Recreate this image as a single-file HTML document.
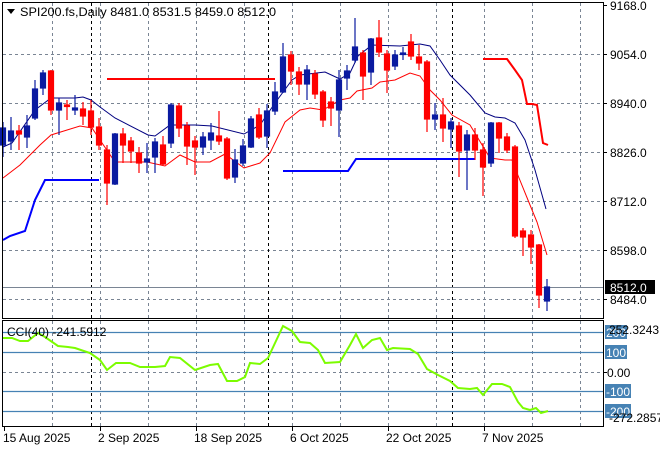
<!DOCTYPE html>
<html><head><meta charset="utf-8"><style>
html,body{margin:0;padding:0;background:#fff;width:660px;height:450px;overflow:hidden}
svg{display:block;font-family:"Liberation Sans",sans-serif}
</style></head><body>
<svg width="660" height="450" viewBox="0 0 660 450" xmlns="http://www.w3.org/2000/svg">
<rect width="660" height="450" fill="#fff"/>
<g stroke="#7a8594" stroke-width="1" stroke-dasharray="3,3" fill="none">
<line x1="3" y1="54.5" x2="603" y2="54.5"/><line x1="3" y1="103.5" x2="603" y2="103.5"/><line x1="3" y1="152.5" x2="603" y2="152.5"/><line x1="3" y1="201.5" x2="603" y2="201.5"/><line x1="3" y1="250.5" x2="603" y2="250.5"/><line x1="3" y1="299.5" x2="603" y2="299.5"/>
<line x1="3" y1="372.5" x2="603" y2="372.5"/>
<path d="M52.5 3V318M100.5 3V318M148.5 3V318M196.5 3V318M244.5 3V318M292.5 3V318M340.5 3V318M388.5 3V318M436.5 3V318M484.5 3V318M532.5 3V318M580.5 3V318"/>
<path d="M52.5 321V426M100.5 321V426M148.5 321V426M196.5 321V426M244.5 321V426M292.5 321V426M340.5 321V426M388.5 321V426M436.5 321V426M484.5 321V426M532.5 321V426M580.5 321V426"/>
</g>
<g stroke="#000" stroke-width="1" stroke-dasharray="3,3">
<path d="M91.5 3V318M268.5 3V318M452.5 3V318M91.5 321V426M268.5 321V426M452.5 321V426"/>
</g>
<line x1="3" y1="287.5" x2="603" y2="287.5" stroke="#7a8594"/>
<g stroke="#4682b4" stroke-width="1.2">
<line x1="3" y1="332.5" x2="603" y2="332.5"/><line x1="3" y1="352.5" x2="603" y2="352.5"/><line x1="3" y1="391.5" x2="603" y2="391.5"/><line x1="3" y1="411.5" x2="603" y2="411.5"/>
</g>
<polyline fill="none" stroke="#0000ff" stroke-width="2" points="3,240 10,236 25,231 35,200 45,180 99,180"/>
<polyline fill="none" stroke="#0000ff" stroke-width="2" points="283,171 348,171 356,159 475,159"/>
<polyline fill="none" stroke="#ff0000" stroke-width="2" points="107,79 275,79"/>
<polyline fill="none" stroke="#ff0000" stroke-width="2" points="483,59 507,59 515,70 522,80 527,104 532,104 537,105 543,143 548,145"/>
<polyline fill="none" stroke="#000080" stroke-width="1" points="3,147 12,143 35,110 51,98 75,98 83,97 91,100 100,107 115,118 148,135 155,136 170,125 195,125 212,126 244,134 260,125 275,103 292,80 300,75 325,72 340,79 350,73 358,56 372,45 400,46 420,44 430,46 440,60 450,75 470,95 485,113 495,117 505,118 515,123 525,140 535,170 546,209"/>
<polyline fill="none" stroke="#ff0000" stroke-width="1" points="3,178 20,165 40,145 51,135 80,126 92,128 100,140 115,162 130,162 147,162 165,166 180,155 195,162 210,162 225,154 244,168 260,163 270,153 285,122 300,110 310,108 323,110 340,100 350,98 357,91 372,88 380,82 395,80 410,73 420,76 430,90 440,100 452,115 470,125 490,158 505,160 512,160 517,173 530,205 537,222 547,255"/>
<g stroke-width="1.2">
<g stroke="#0a1aa0" fill="#0a1aa0">
<line x1="3" y1="122" x2="3" y2="157"/><rect x="0.5" y="128" width="5" height="17"/>
<line x1="11" y1="117" x2="11" y2="150"/><rect x="8.5" y="131" width="5" height="10"/>
<line x1="27" y1="115" x2="27" y2="148"/><rect x="24.5" y="126" width="5" height="11"/>
<line x1="35" y1="80" x2="35" y2="120"/><rect x="32.5" y="89" width="5" height="29"/>
<line x1="43" y1="70" x2="43" y2="95"/><rect x="40.5" y="73" width="5" height="15"/>
<line x1="59" y1="98" x2="59" y2="135"/><rect x="56.5" y="103" width="5" height="7"/>
<line x1="75" y1="95" x2="75" y2="115"/><rect x="72.5" y="108" width="5" height="2"/>
<line x1="115" y1="133" x2="115" y2="185"/><rect x="112.5" y="134" width="5" height="50"/>
<line x1="147" y1="143" x2="147" y2="173"/><rect x="144.5" y="159" width="5" height="3"/>
<line x1="155" y1="138" x2="155" y2="173"/><rect x="152.5" y="142" width="5" height="15"/>
<line x1="171" y1="103" x2="171" y2="148"/><rect x="168.5" y="105" width="5" height="38"/>
<line x1="203" y1="132" x2="203" y2="155"/><rect x="200.5" y="137" width="5" height="10"/>
<line x1="211" y1="123" x2="211" y2="150"/><rect x="208.5" y="133" width="5" height="7"/>
<line x1="235" y1="149" x2="235" y2="183"/><rect x="232.5" y="160" width="5" height="17"/>
<line x1="243" y1="139" x2="243" y2="166"/><rect x="240.5" y="146" width="5" height="17"/>
<line x1="251" y1="116" x2="251" y2="148"/><rect x="248.5" y="119" width="5" height="28"/>
<line x1="267" y1="104" x2="267" y2="148"/><rect x="264.5" y="111" width="5" height="25"/>
<line x1="275" y1="82" x2="275" y2="115"/><rect x="272.5" y="92" width="5" height="19"/>
<line x1="283" y1="43" x2="283" y2="93"/><rect x="280.5" y="57" width="5" height="35"/>
<line x1="307" y1="65" x2="307" y2="100"/><rect x="304.5" y="70" width="5" height="14"/>
<line x1="339" y1="70" x2="339" y2="137"/><rect x="336.5" y="80" width="5" height="30"/>
<line x1="347" y1="65" x2="347" y2="90"/><rect x="344.5" y="71" width="5" height="7"/>
<line x1="355" y1="18" x2="355" y2="63"/><rect x="352.5" y="47" width="5" height="13"/>
<line x1="371" y1="38" x2="371" y2="85"/><rect x="368.5" y="39" width="5" height="33"/>
<line x1="395" y1="50" x2="395" y2="70"/><rect x="392.5" y="55" width="5" height="11"/>
<line x1="403" y1="47" x2="403" y2="60"/><rect x="400.5" y="53" width="5" height="1.5"/>
<line x1="435" y1="103" x2="435" y2="130"/><rect x="432.5" y="115" width="5" height="4"/>
<line x1="451" y1="118" x2="451" y2="148"/><rect x="448.5" y="122" width="5" height="7"/>
<line x1="467" y1="130" x2="467" y2="190"/><rect x="464.5" y="135" width="5" height="15"/>
<line x1="491" y1="122" x2="491" y2="167"/><rect x="488.5" y="123" width="5" height="40"/>
<line x1="547" y1="279" x2="547" y2="311"/><rect x="544.5" y="287" width="5" height="14"/>
</g>
<g stroke="#ff0000" fill="#ff0000">
<line x1="19" y1="125" x2="19" y2="150"/><rect x="16.5" y="131" width="5" height="3"/>
<line x1="51" y1="70" x2="51" y2="115"/><rect x="48.5" y="71" width="5" height="39"/>
<line x1="67" y1="100" x2="67" y2="120"/><rect x="64.5" y="105" width="5" height="1.5"/>
<line x1="83" y1="102" x2="83" y2="125"/><rect x="80.5" y="109" width="5" height="7"/>
<line x1="91" y1="100" x2="91" y2="135"/><rect x="88.5" y="111" width="5" height="16"/>
<line x1="99" y1="118" x2="99" y2="150"/><rect x="96.5" y="127" width="5" height="18"/>
<line x1="107" y1="145" x2="107" y2="205"/><rect x="104.5" y="150" width="5" height="33"/>
<line x1="123" y1="128" x2="123" y2="163"/><rect x="120.5" y="134" width="5" height="11"/>
<line x1="131" y1="137" x2="131" y2="163"/><rect x="128.5" y="141" width="5" height="10"/>
<line x1="139" y1="147" x2="139" y2="173"/><rect x="136.5" y="153" width="5" height="10"/>
<line x1="163" y1="136" x2="163" y2="165"/><rect x="160.5" y="145" width="5" height="19"/>
<line x1="179" y1="103" x2="179" y2="137"/><rect x="176.5" y="106" width="5" height="22"/>
<line x1="187" y1="122" x2="187" y2="165"/><rect x="184.5" y="126" width="5" height="20"/>
<line x1="195" y1="136" x2="195" y2="175"/><rect x="192.5" y="141" width="5" height="6"/>
<line x1="219" y1="111" x2="219" y2="145"/><rect x="216.5" y="136" width="5" height="5"/>
<line x1="227" y1="137" x2="227" y2="180"/><rect x="224.5" y="139" width="5" height="39"/>
<line x1="259" y1="108" x2="259" y2="139"/><rect x="256.5" y="115" width="5" height="22"/>
<line x1="291" y1="51" x2="291" y2="85"/><rect x="288.5" y="55" width="5" height="16"/>
<line x1="299" y1="67" x2="299" y2="95"/><rect x="296.5" y="72" width="5" height="12"/>
<line x1="315" y1="70" x2="315" y2="99"/><rect x="312.5" y="74" width="5" height="20"/>
<line x1="323" y1="90" x2="323" y2="127"/><rect x="320.5" y="92" width="5" height="28"/>
<line x1="331" y1="97" x2="331" y2="126"/><rect x="328.5" y="102" width="5" height="6"/>
<line x1="363" y1="50" x2="363" y2="100"/><rect x="360.5" y="53" width="5" height="23"/>
<line x1="379" y1="20" x2="379" y2="57"/><rect x="376.5" y="38" width="5" height="14"/>
<line x1="387" y1="50" x2="387" y2="93"/><rect x="384.5" y="54" width="5" height="16"/>
<line x1="411" y1="34" x2="411" y2="60"/><rect x="408.5" y="42" width="5" height="14"/>
<line x1="419" y1="45" x2="419" y2="70"/><rect x="416.5" y="57" width="5" height="6"/>
<line x1="427" y1="60" x2="427" y2="132"/><rect x="424.5" y="62" width="5" height="57"/>
<line x1="443" y1="98" x2="443" y2="142"/><rect x="440.5" y="115" width="5" height="13"/>
<line x1="459" y1="122" x2="459" y2="177"/><rect x="456.5" y="126" width="5" height="25"/>
<line x1="475" y1="128" x2="475" y2="160"/><rect x="472.5" y="135" width="5" height="15"/>
<line x1="483" y1="143" x2="483" y2="196"/><rect x="480.5" y="150" width="5" height="17"/>
<line x1="499" y1="122" x2="499" y2="153"/><rect x="496.5" y="123" width="5" height="15"/>
<line x1="507" y1="133" x2="507" y2="153"/><rect x="504.5" y="137" width="5" height="13"/>
<line x1="515" y1="145" x2="515" y2="238"/><rect x="512.5" y="147" width="5" height="89"/>
<line x1="523" y1="228" x2="523" y2="256"/><rect x="520.5" y="231" width="5" height="6"/>
<line x1="531" y1="230" x2="531" y2="264"/><rect x="528.5" y="235" width="5" height="12"/>
<line x1="539" y1="244" x2="539" y2="308"/><rect x="536.5" y="245" width="5" height="50"/>
</g>
</g>
<polyline fill="none" stroke="#7cfc00" stroke-width="2" points="3,338 12,338 20,341 28,341 38,333 45,337 58,346 68,347 75,348 90,353 100,360 107,370 116,363 130,363 140,367 155,367 165,366 170,357 180,358 195,370 210,365 218,364 227,381 237,381 245,377 250,363 260,364 268,358 283,326 292,331 300,342 310,343 318,350 325,363 340,362 350,345 356,334 363,348 372,340 380,338 387,350 393,348 410,349 418,354 427,369 438,375 450,381 458,388 470,389 477,388 483,395 492,384 502,384 510,387 518,402 523,408 530,410 536,408 541,413 548,411"/>
<g fill="none" stroke="#000" stroke-width="1">
<rect x="2.5" y="2.5" width="601" height="316"/>
<rect x="2.5" y="320.5" width="601" height="106"/>
</g>
<g stroke="#000"><path d="M603 54.5h4M603 103.5h4M603 152.5h4M603 201.5h4M603 250.5h4M603 299.5h4M603 5.5h4M603 372.5h4"/>
<path d="M4.5 427v4M100.5 427v4M196.5 427v4M292.5 427v4M388.5 427v4M484.5 427v4"/></g>
<g font-size="12" fill="#000">
<path d="M7 9h8l-4 5z" fill="#000"/>
<text x="20" y="16" textLength="256" lengthAdjust="spacingAndGlyphs">SPI200.fs,Daily  8481.0 8531.5 8459.0 8512.0</text>
<text x="610" y="10">9168.0</text>
<text x="610" y="59">9054.0</text>
<text x="610" y="108">8940.0</text>
<text x="610" y="157">8826.0</text>
<text x="610" y="206">8712.0</text>
<text x="610" y="255">8598.0</text>
<text x="610" y="304">8484.0</text>
<rect x="605" y="280" width="50" height="14" fill="#000"/>
<text x="610" y="292" fill="#fff">8512.0</text>
<text x="7" y="336">CCI(40) -241.5912</text>
<rect x="605" y="325" width="22" height="14" fill="#4682b4"/>
<rect x="605" y="345" width="22" height="14" fill="#4682b4"/>
<rect x="605" y="384" width="26" height="14" fill="#4682b4"/>
<rect x="605" y="404" width="26" height="14" fill="#4682b4"/>
<text x="606" y="337" fill="#fff">200</text>
<text x="606" y="357" fill="#fff">100</text>
<text x="607" y="377">0.00</text>
<text x="606" y="396" fill="#fff">-100</text>
<text x="606" y="416" fill="#fff">-200</text>
<text x="609" y="334">252.3243</text>
<text x="609" y="422">-272.2857</text>
<text x="3" y="442">15 Aug 2025</text>
<text x="98" y="442">2 Sep 2025</text>
<text x="194" y="442">18 Sep 2025</text>
<text x="290" y="442">6 Oct 2025</text>
<text x="386" y="442">22 Oct 2025</text>
<text x="482" y="442">7 Nov 2025</text>
</g>
</svg>
</body></html>
